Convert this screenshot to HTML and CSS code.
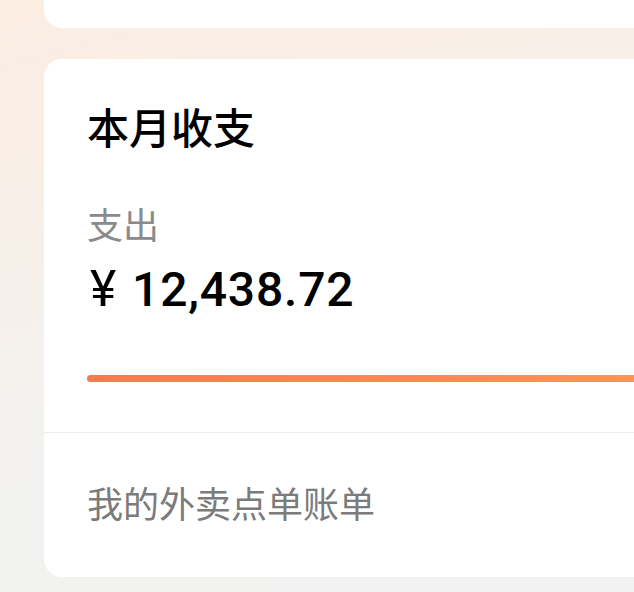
FILE: index.html
```html
<!DOCTYPE html>
<html lang="zh-CN">
<head>
    <meta charset="UTF-8">
    <meta name="viewport" content="width=device-width, initial-scale=1.0">
    <title>本月收支</title>
    <link rel="stylesheet" href="styles.css">
</head>
<body>
    <div class="page">
        <div class="card card-prev"></div>

        <section class="card summary">
            <div class="summary-main">
                <h2 class="summary-title">本月收支</h2>
                <div class="summary-label">支出</div>
                <div class="summary-amount"><span class="currency">¥</span>12,438.72</div>
                <div class="progress"><div class="progress-fill"></div></div>
            </div>
            <a class="summary-link" href="#">我的外卖点单账单</a>
        </section>
    </div>
</body>
</html>
```

FILE: styles.css
```css
html, body {
    margin: 0;
    padding: 0;
}
body {
    font-family: "Noto Sans CJK SC", "Noto Sans", sans-serif;
    background: linear-gradient(165deg, #fbede2 0%, #f7efe8 30%, #f3f2f0 60%, #f2f2f2 100%);
    min-height: 592px;
    overflow: hidden;
}
.page {
    padding-left: 44px;
}
.card {
    background-color: #fff;
    width: 700px;
}
.card-prev {
    height: 28px;
    border-radius: 0 0 0 18px;
}
.summary {
    margin-top: 31px;
    border-radius: 18px 0 0 18px;
}
.summary-main {
    padding: 46px 43px 50px;
    border-bottom: 1px solid #ececec;
}
.summary-title {
    margin: 0;
    font-size: 42px;
    line-height: 42px;
    font-weight: 500;
    color: #000;
}
.summary-label {
    margin-top: 58px;
    font-size: 36px;
    line-height: 36px;
    color: #8a8a8a;
}
.summary-amount {
    margin-top: 24px;
    font-family: Roboto, "Noto Sans", sans-serif;
    font-size: 48px;
    line-height: 48px;
    font-weight: 500;
    color: #000;
    letter-spacing: 0.8px;
}
.currency {
    display: inline-block;
    font-size: 50px;
    font-weight: 400;
    margin-left: 3px;
    margin-right: 15px;
}
.progress {
    margin-top: 61px;
    height: 7px;
}
.progress-fill {
    height: 100%;
    border-radius: 4px;
    background: linear-gradient(90deg, #ef7e4e, #fd9657);
}
.summary-link {
    display: block;
    padding: 51px 43px 57px;
    font-size: 36px;
    line-height: 36px;
    color: #7b7b7b;
    text-decoration: none;
}
```
